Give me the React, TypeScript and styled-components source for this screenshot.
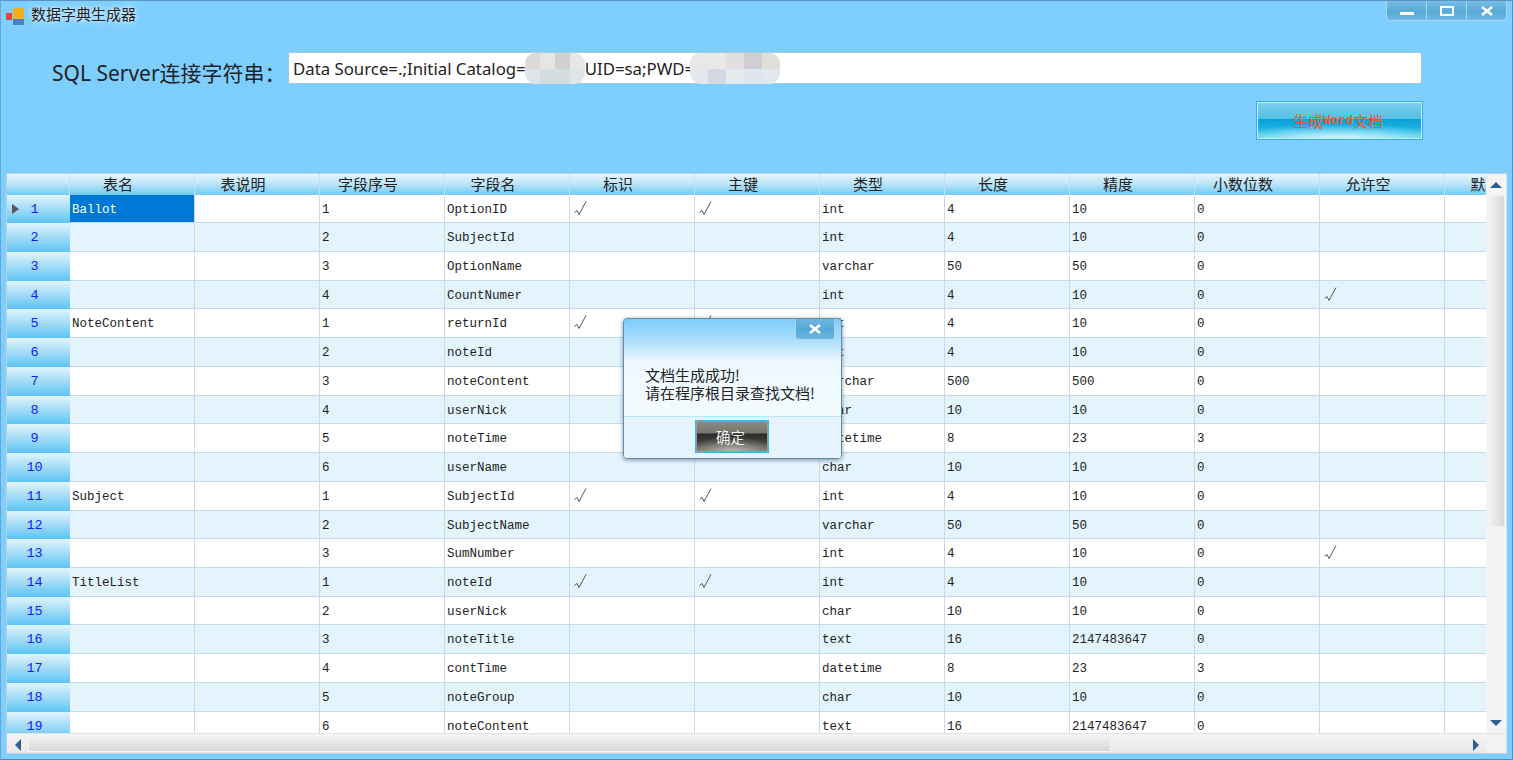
import React from 'react';
import styled, { createGlobalStyle } from 'styled-components';

const GlobalStyle = createGlobalStyle`
  html, body { margin: 0; padding: 0; overflow: hidden; background: #7ecfff; }
  * { box-sizing: border-box; }
`;

const cjk = `"Noto Sans", "Noto Sans CJK SC", sans-serif`;
const cellFont = `"Liberation Mono", "Noto Sans CJK SC", monospace`;

const columns = ['表名', '表说明', '字段序号', '字段名', '标识', '主键', '类型', '长度', '精度', '小数位数', '允许空', '默认值'];

type Row = [string, number, string, boolean, boolean, string, number, number, number, boolean];

const rows: Row[] = [
  ['Ballot', 1, 'OptionID', true, true, 'int', 4, 10, 0, false],
  ['', 2, 'SubjectId', false, false, 'int', 4, 10, 0, false],
  ['', 3, 'OptionName', false, false, 'varchar', 50, 50, 0, false],
  ['', 4, 'CountNumer', false, false, 'int', 4, 10, 0, true],
  ['NoteContent', 1, 'returnId', true, true, 'int', 4, 10, 0, false],
  ['', 2, 'noteId', false, false, 'int', 4, 10, 0, false],
  ['', 3, 'noteContent', false, false, 'varchar', 500, 500, 0, false],
  ['', 4, 'userNick', false, false, 'char', 10, 10, 0, false],
  ['', 5, 'noteTime', false, false, 'datetime', 8, 23, 3, false],
  ['', 6, 'userName', false, false, 'char', 10, 10, 0, false],
  ['Subject', 1, 'SubjectId', true, true, 'int', 4, 10, 0, false],
  ['', 2, 'SubjectName', false, false, 'varchar', 50, 50, 0, false],
  ['', 3, 'SumNumber', false, false, 'int', 4, 10, 0, true],
  ['TitleList', 1, 'noteId', true, true, 'int', 4, 10, 0, false],
  ['', 2, 'userNick', false, false, 'char', 10, 10, 0, false],
  ['', 3, 'noteTitle', false, false, 'text', 16, 2147483647, 0, false],
  ['', 4, 'contTime', false, false, 'datetime', 8, 23, 3, false],
  ['', 5, 'noteGroup', false, false, 'char', 10, 10, 0, false],
  ['', 6, 'noteContent', false, false, 'text', 16, 2147483647, 0, false],
];

const maskA = ['#dcd9d9', '#e6e6e4', '#cfd0cf', '#e8e8e8', '#dfe4e8', '#d6dde0', '#d6dde1', '#dfe5e9'];
const maskB = ['#e8e8e8', '#e9e9ea', '#e2dfe0', '#cfced2', '#e0e0da', '#e4e8ec', '#d3d8e2', '#e6ebee', '#dfe5ec', '#e2e8ec'];

const CheckMark = () => (
  <CheckIcon width="13" height="15" viewBox="0 0 13 15">
    <path d="M0.5 11.5 L3 9.5 L5 13.5 L12 0.5" fill="none" stroke="#555" strokeWidth="1" />
  </CheckIcon>
);

const App: React.FC = () => {
  return (
    <Window>
      <GlobalStyle />
      <TitleBar>
        <AppIcon width="18" height="18" viewBox="0 0 18 18">
          <rect x="0" y="5" width="6" height="7" fill="#e8433a" />
          <rect x="7" y="0" width="11" height="11" fill="#f2b01e" />
          <rect x="7" y="11" width="11" height="6" fill="#4a7fd0" />
        </AppIcon>
        <TitleText>数据字典生成器</TitleText>
        <WindowButtons>
          <WindowButton>
            <svg width="14" height="10" viewBox="0 0 14 10"><rect x="0" y="6" width="14" height="3" fill="#fff" /></svg>
          </WindowButton>
          <WindowButton>
            <svg width="14" height="10" viewBox="0 0 14 10"><rect x="1" y="1" width="12" height="8" fill="none" stroke="#fff" strokeWidth="2" /></svg>
          </WindowButton>
          <WindowButton>
            <svg width="12" height="10" viewBox="0 0 12 10"><path d="M1 1 L11 9 M11 1 L1 9" stroke="#fff" strokeWidth="2.6" /></svg>
          </WindowButton>
        </WindowButtons>
      </TitleBar>

      <ConnectionRow>
        <ConnectionLabel>SQL Server连接字符串：</ConnectionLabel>
        <ConnectionInput>
          <span>Data Source=.;Initial Catalog=</span>
          <Mosaic $cols={4} $width={60} $overlap={1}>
            {maskA.map((c, i) => <i key={i} style={{ background: c }} />)}
          </Mosaic>
          <span>UID=sa;PWD=</span>
          <Mosaic $cols={5} $width={90} $overlap={4}>
            {maskB.map((c, i) => <i key={i} style={{ background: c }} />)}
          </Mosaic>
        </ConnectionInput>
      </ConnectionRow>

      <ActionRow>
        <GenerateButton>生成<GenerateLatin>Word</GenerateLatin>文档</GenerateButton>
      </ActionRow>

      <GridFrame>
        <GridMain>
          <GridClip>
            <HeaderRow>
              <HeaderCell />
              {columns.map(c => <HeaderCell key={c}>{c}</HeaderCell>)}
            </HeaderRow>
            {rows.map((r, i) => (
              <DataRow key={i} $alt={i % 2 === 1}>
                <RowHead>
                  {i === 0 && <RowPointer />}
                  {i + 1}
                </RowHead>
                <Cell $selected={i === 0}>{r[0]}</Cell>
                <Cell />
                <Cell>{r[1]}</Cell>
                <Cell>{r[2]}</Cell>
                <Cell>{r[3] && <CheckMark />}</Cell>
                <Cell>{r[4] && <CheckMark />}</Cell>
                <Cell>{r[5]}</Cell>
                <Cell>{r[6]}</Cell>
                <Cell>{r[7]}</Cell>
                <Cell>{r[8]}</Cell>
                <Cell>{r[9] && <CheckMark />}</Cell>
                <Cell />
              </DataRow>
            ))}
          </GridClip>
          <VScroll>
            <ScrollArrow $dir="up" />
            <VThumb />
            <VTrack />
            <ScrollArrow $dir="down" />
          </VScroll>
        </GridMain>
        <HScroll>
          <ScrollArrow $dir="left" />
          <HThumb />
          <HTrack />
          <ScrollArrow $dir="right" />
          <ScrollCorner />
        </HScroll>
      </GridFrame>

      <Dialog>
        <DialogClose>
          <svg width="12" height="10" viewBox="0 0 12 10"><path d="M1 1 L11 9 M11 1 L1 9" stroke="#fff" strokeWidth="2.6" /></svg>
        </DialogClose>
        <DialogBody>
          文档生成成功!<br />
          请在程序根目录查找文档!
        </DialogBody>
        <DialogFooter>
          <OkButton>确定</OkButton>
        </DialogFooter>
      </Dialog>
    </Window>
  );
};

export default App;

const Window = styled.div`
  position: relative;
  width: 1513px;
  height: 760px;
  padding: 0 6px 6px 6px;
  display: flex;
  flex-direction: column;
  background: #7ecfff;
  border-left: 1px solid #6aa6cf;
  border-top: 1px solid #5a94c0;
  border-right: 1px solid #4f8fc2;
  border-bottom: 1px solid #4a8ab8;
  overflow: hidden;
`;

const TitleBar = styled.div`
  height: 21px;
  margin-left: -1px;
  display: flex;
  align-items: flex-start;
  flex: none;
`;

const AppIcon = styled.svg`
  margin-top: 7px;
  flex: none;
`;

const TitleText = styled.div`
  margin-left: 7px;
  margin-top: 3px;
  font: 15px/20px ${cjk};
  color: #222;
  text-shadow: 0 0 5px rgba(255, 255, 255, 0.9), 0 0 8px rgba(255, 255, 255, 0.5);
`;

const WindowButtons = styled.div`
  margin-left: auto;
  margin-right: -1px;
  display: flex;
  height: 20px;
  border: 1px solid #a6d6f2;
  border-top: none;
  border-radius: 0 0 5px 5px;
  background: #a6d6f2;
  gap: 1px;
  overflow: hidden;
`;

const WindowButton = styled.div`
  width: 39px;
  display: flex;
  align-items: center;
  justify-content: center;
  background: linear-gradient(#76bde6, #5aa9d8 55%, #6db8e2);
`;

const ConnectionRow = styled.div`
  height: 32px;
  margin-top: 30px;
  margin-left: 45px;
  display: flex;
  align-items: flex-start;
  flex: none;
`;

const ConnectionLabel = styled.div`
  width: 236px;
  margin-top: 8px;
  font: 21px/26px ${cjk};
  color: #222;
  white-space: nowrap;
  flex: none;
`;

const ConnectionInput = styled.div`
  width: 1134px;
  height: 32px;
  padding: 1px 4px 0;
  display: flex;
  align-items: center;
  background: #fff;
  border: 1px solid #9fcbe8;
  border-radius: 2px;
  font: 16.8px/30px ${cjk};
  color: #222;
  white-space: nowrap;
`;

const Mosaic = styled.div<{ $cols: number; $width: number; $overlap?: number }>`
  width: ${p => p.$width}px;
  height: 31px;
  margin-left: ${p => -(p.$overlap ?? 0)}px;
  flex: none;
  display: grid;
  grid-template-columns: repeat(${p => p.$cols}, 1fr);
  grid-auto-rows: 1fr;
  border-radius: 11px;
  overflow: hidden;
`;

const ActionRow = styled.div`
  height: 39px;
  margin-top: 17px;
  display: flex;
  justify-content: flex-end;
  padding-right: 83px;
  flex: none;
`;

const GenerateButton = styled.div`
  width: 167px;
  height: 39px;
  display: flex;
  align-items: center;
  justify-content: center;
  padding-right: 3px;
  border: 1px solid #36ade4;
  box-shadow: inset 0 0 0 1px #c4eef8;
  background:
    radial-gradient(ellipse 70% 40% at 50% 100%, rgba(225, 250, 255, 0.95), rgba(90, 215, 245, 0) 100%),
    linear-gradient(#7ed0ea, #55bfe4 45%, #0aa0d8 47%, #20b4e4 75%, #50d8f6);
  color: #ee5a2a;
  font: 15px/20px "Noto Sans CJK SC", serif;
`;

const GenerateLatin = styled.span`
  font: bold 12.5px/20px "Liberation Mono", monospace;
`;

const GridFrame = styled.div`
  margin-top: 33px;
  width: 1501px;
  height: 581px;
  flex: none;
  display: flex;
  flex-direction: column;
  border: 1px solid #bcd0e4;
  border-right-color: #dbe6f0;
  background: #fff;
  margin-left: -1px;
`;

const GridMain = styled.div`
  flex: 1;
  min-height: 0;
  display: flex;
`;

const GridClip = styled.div`
  flex: 1;
  min-width: 0;
  overflow: hidden;
`;

const HeaderRow = styled.div`
  height: 20.6px;
  display: grid;
  grid-template-columns: 63px repeat(12, 125px);
  width: 1563px;
`;

const HeaderCell = styled.div`
  padding-right: 28px;
  text-align: center;
  font: 15px/19px "Noto Sans CJK SC", sans-serif;
  color: #222;
  background: linear-gradient(#e6f6fd, #bfe6f9 45%, #70caf5);
  border-right: 1px solid #c6e0f2;
  white-space: nowrap;
`;

const DataRow = styled.div<{ $alt: boolean }>`
  height: 28.72px;
  width: 1563px;
  display: grid;
  grid-template-columns: 63px repeat(12, 125px);
  grid-template-rows: minmax(0, 1fr);
  background: ${p => (p.$alt ? '#e4f4fd' : '#fff')};
`;

const RowHead = styled.div`
  position: relative;
  padding-right: 8px;
  text-align: center;
  font: 13.5px/30.5px ${cellFont};
  color: #1a1aff;
  background: linear-gradient(#e2f4fc, #a8def7 45%, #5cc4f5);
  overflow: hidden;
`;

const RowPointer = styled.span`
  position: absolute;
  left: 5px;
  top: 9px;
  border-left: 7px solid #555;
  border-top: 5px solid transparent;
  border-bottom: 5px solid transparent;
`;

const Cell = styled.div<{ $selected?: boolean }>`
  padding-left: 2px;
  font: 12.5px/30.5px ${cellFont};
  color: ${p => (p.$selected ? '#fff' : '#222')};
  background: ${p => (p.$selected ? '#0078d7' : 'transparent')};
  border-right: 1px solid #c5d9ef;
  border-bottom: 1px solid #c5d9ef;
  white-space: nowrap;
  overflow: hidden;
`;

const CheckIcon = styled.svg`
  display: block;
  margin: 6px 0 0 2px;
`;

const VScroll = styled.div`
  width: 20px;
  flex: none;
  display: flex;
  flex-direction: column;
  background: #f4f4f4;
`;

const VThumb = styled.div`
  height: 332px;
  margin: 0 1px;
  flex: none;
  background: linear-gradient(90deg, #f4f4f4, #e6e6e6 50%, #d8d8d8);
  border: 1px solid #f0f0f0;
`;

const VTrack = styled.div`
  flex: 1;
`;

const HScroll = styled.div`
  height: 20px;
  flex: none;
  display: flex;
  background: linear-gradient(#f4f4f4, #e8e8e8);
  border-top: 1px solid #e2e2e2;
`;

const HThumb = styled.div`
  width: 1083px;
  margin: 1px 0;
  flex: none;
  background: linear-gradient(#f2f2f2, #e4e4e4 50%, #d8d8d8);
  border: 1px solid #f4f4f4;
`;

const HTrack = styled.div`
  flex: 1;
`;

const ScrollCorner = styled.div`
  width: 20px;
  flex: none;
  background: #f2f2f2;
`;

const ScrollArrow = styled.div<{ $dir: 'up' | 'down' | 'left' | 'right' }>`
  width: ${p => (p.$dir === 'left' ? '21px' : '20px')};
  height: 21px;
  flex: none;
  display: flex;
  align-items: center;
  justify-content: center;
  &::after {
    content: '';
    ${p => p.$dir === 'up' && 'border-bottom: 6px solid #2a5f95; border-left: 6px solid transparent; border-right: 6px solid transparent;'}
    ${p => p.$dir === 'down' && 'border-top: 6px solid #2a5f95; border-left: 6px solid transparent; border-right: 6px solid transparent;'}
    ${p => p.$dir === 'left' && 'border-right: 6px solid #2a5f95; border-top: 6px solid transparent; border-bottom: 6px solid transparent;'}
    ${p => p.$dir === 'right' && 'border-left: 6px solid #2a5f95; border-top: 6px solid transparent; border-bottom: 6px solid transparent;'}
  }
`;

const Dialog = styled.div`
  position: absolute;
  left: 622px;
  top: 317px;
  width: 219px;
  height: 141px;
  display: flex;
  flex-direction: column;
  border: 1px solid #5f8fa8;
  border-radius: 4px;
  background: linear-gradient(#7ccdfb, #bde5fb 20%, #ecf8fe 30%, #f4fbff 70%);
  box-shadow: 0 1px 4px rgba(40, 60, 80, 0.55);
  overflow: hidden;
`;

const DialogClose = styled.div`
  position: absolute;
  right: 6px;
  top: 0;
  width: 40px;
  height: 21px;
  display: flex;
  align-items: center;
  justify-content: center;
  border: 1px solid #a6d6f2;
  border-top: none;
  border-radius: 0 0 4px 4px;
  background: linear-gradient(#6db7e2, #58a8d8 55%, #6db8e2);
`;

const DialogBody = styled.div`
  flex: 1;
  padding: 47px 0 0 21px;
  font: 15px/18px "Noto Sans CJK SC", sans-serif;
  color: #222;
  white-space: nowrap;
`;

const DialogFooter = styled.div`
  height: 42px;
  flex: none;
  display: flex;
  justify-content: center;
  align-items: flex-start;
  padding: 3px 2px 0 0;
  background: #e6f5fd;
  border-top: 1px solid #bfe4f8;
`;

const OkButton = styled.div`
  width: 74px;
  height: 33px;
  padding-right: 2px;
  text-align: center;
  border: 1px solid #3fb4e6;
  box-shadow: inset 0 0 0 1px #9c9c94;
  background:
    radial-gradient(ellipse 70% 50% at 50% 100%, rgba(200, 200, 195, 0.85), rgba(90, 90, 85, 0) 100%),
    linear-gradient(#8a8a82, #77776f 38%, #2c2c2a 42%, #3c3c3a 70%, #6e6e68);
  color: #f2f2f2;
  font: 14.5px/31px "Noto Sans CJK SC", sans-serif;
`;
